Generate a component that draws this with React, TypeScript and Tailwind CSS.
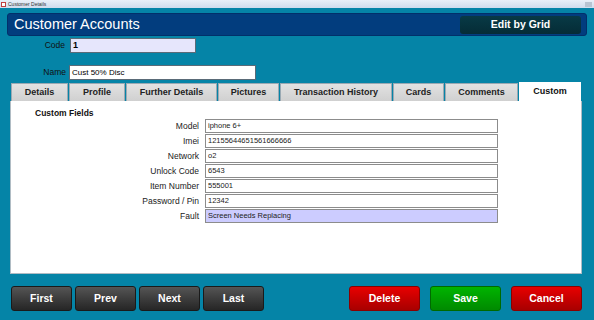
const fields = [
  { label: 'Model', value: 'iphone 6+' },
  { label: 'Imei', value: '12155644651561666666' },
  { label: 'Network', value: 'o2' },
  { label: 'Unlock Code', value: '6543' },
  { label: 'Item Number', value: '555001' },
  { label: 'Password / Pin', value: '12342' },
  { label: 'Fault', value: 'Screen Needs Replacing', focus: true },
]

const tabs = [
  { name: 'Details', w: 'w-[57px]' },
  { name: 'Profile', w: 'w-[56px]' },
  { name: 'Further Details', w: 'w-[91px]' },
  { name: 'Pictures', w: 'w-[61px]' },
  { name: 'Transaction History', w: 'w-[112px]' },
  { name: 'Cards', w: 'w-[51px]' },
  { name: 'Comments', w: 'w-[73px]' },
]

function NavButton({ label }: { label: string }) {
  return (
    <button
      type="button"
      className="flex h-[25px] w-[61px] items-center justify-center rounded-[3px] border border-[#1a1a1a] bg-gradient-to-b from-[#555555] to-[#262626] text-[10.5px] font-bold text-white"
    >
      {label}
    </button>
  )
}

function ActionButton({ label, tone }: { label: string; tone: 'red' | 'green' }) {
  const cls =
    tone === 'red'
      ? 'border-[#8a0000] from-[#e80000] to-[#a80000]'
      : 'border-[#006a00] from-[#00b400] to-[#008a00]'
  return (
    <button
      type="button"
      className={`flex h-[25px] w-[71px] items-center justify-center rounded-[3px] border bg-gradient-to-b text-[10.5px] font-bold text-white ${cls}`}
    >
      {label}
    </button>
  )
}

export default function App() {
  return (
    <div
      className="relative flex h-[320px] w-[594px] flex-col overflow-hidden bg-[#0584a7]"
      style={{ fontFamily: '"Liberation Sans", Arial, sans-serif' }}
    >
      {/* window title bar */}
      <div className="flex h-[8px] items-center justify-between bg-gradient-to-b from-[#e9f0f8] to-[#cfdced] pl-[1px] pr-[2px]">
        <div className="flex items-center gap-[2px]">
          <span className="h-[5px] w-[5px] border border-[#c04040] bg-white" />
          <span className="text-[5px] leading-none text-[#333]">Customer Details</span>
        </div>
        <span className="h-[5px] w-[7px] bg-[#b8c4d2]" />
      </div>

      {/* header */}
      <div className="mx-[7px] mt-[5px] flex h-[23px] items-center justify-between rounded-[3px] border border-[#02306a] bg-[#023d7e] pl-[6px] pr-[5px]">
        <span className="text-[14.5px] leading-none text-white">Customer Accounts</span>
        <div className="flex h-[18px] w-[121px] items-center justify-center rounded-[3px] bg-gradient-to-b from-[#083a46] to-[#052c36] text-[10.5px] font-bold text-white">
          Edit by Grid
        </div>
      </div>

      {/* code / name */}
      <div className="mt-[2px] flex items-center">
        <span className="w-[70px] pr-[5px] text-right text-[8.5px] text-[#111]">Code</span>
        <div className="flex h-[15px] w-[126px] items-center border border-[#5a6b78] bg-[#e6e6fc] px-[2px] text-[9px] font-bold text-black">
          1
        </div>
      </div>
      <div className="mt-[12px] flex items-center">
        <span className="w-[69px] pr-[3px] text-right text-[8.5px] text-[#111]">Name</span>
        <div className="flex h-[15px] w-[187px] items-center border border-[#5a6b78] bg-white px-[2px] text-[8px] text-black">
          Cust 50% Disc
        </div>
      </div>

      {/* tabs */}
      <div className="ml-[11px] mt-[2px] flex items-end gap-[1px]">
        {tabs.map(t => (
          <div
            key={t.name}
            className={`flex h-[18px] ${t.w} items-center justify-center whitespace-nowrap border border-b-0 border-[#9aa9b3] bg-gradient-to-b from-[#e2e2e2] to-[#d0d0d0] text-[9px] font-bold text-[#222]`}
          >
            {t.name}
          </div>
        ))}
        <div className="flex h-[19px] w-[62px] items-start justify-center bg-white pt-[3px] text-[9px] font-bold text-[#111]">
          Custom
        </div>
      </div>

      {/* panel */}
      <div className="ml-[10px] h-[173px] w-[572px] border border-t-0 border-[#b0bcc4] bg-white pt-[7px]">
        <div className="h-[11px] pl-[24px] text-[8.5px] font-bold leading-[11px] text-[#111]">Custom Fields</div>
        <div className="flex flex-col gap-[1px]">
          {fields.map(f => (
            <div key={f.label} className="flex items-center">
              <span className="w-[194px] pr-[6px] text-right text-[8.5px] leading-none text-[#222]">{f.label}</span>
              <div
                className={`flex h-[14px] w-[293px] items-center border border-[#8c8c8c] px-[2px] text-[7.5px] text-[#222] ${f.focus ? 'bg-[#ccccff]' : 'bg-white'}`}
              >
                {f.value}
              </div>
            </div>
          ))}
        </div>
      </div>

      {/* buttons */}
      <div className="mt-[12px] flex items-center pl-[11px] pr-[12px]">
        <div className="flex gap-[3px]">
          <NavButton label="First" />
          <NavButton label="Prev" />
          <NavButton label="Next" />
          <NavButton label="Last" />
        </div>
        <div className="ml-auto flex gap-[10px]">
          <ActionButton label="Delete" tone="red" />
          <ActionButton label="Save" tone="green" />
          <ActionButton label="Cancel" tone="red" />
        </div>
      </div>
    </div>
  )
}
